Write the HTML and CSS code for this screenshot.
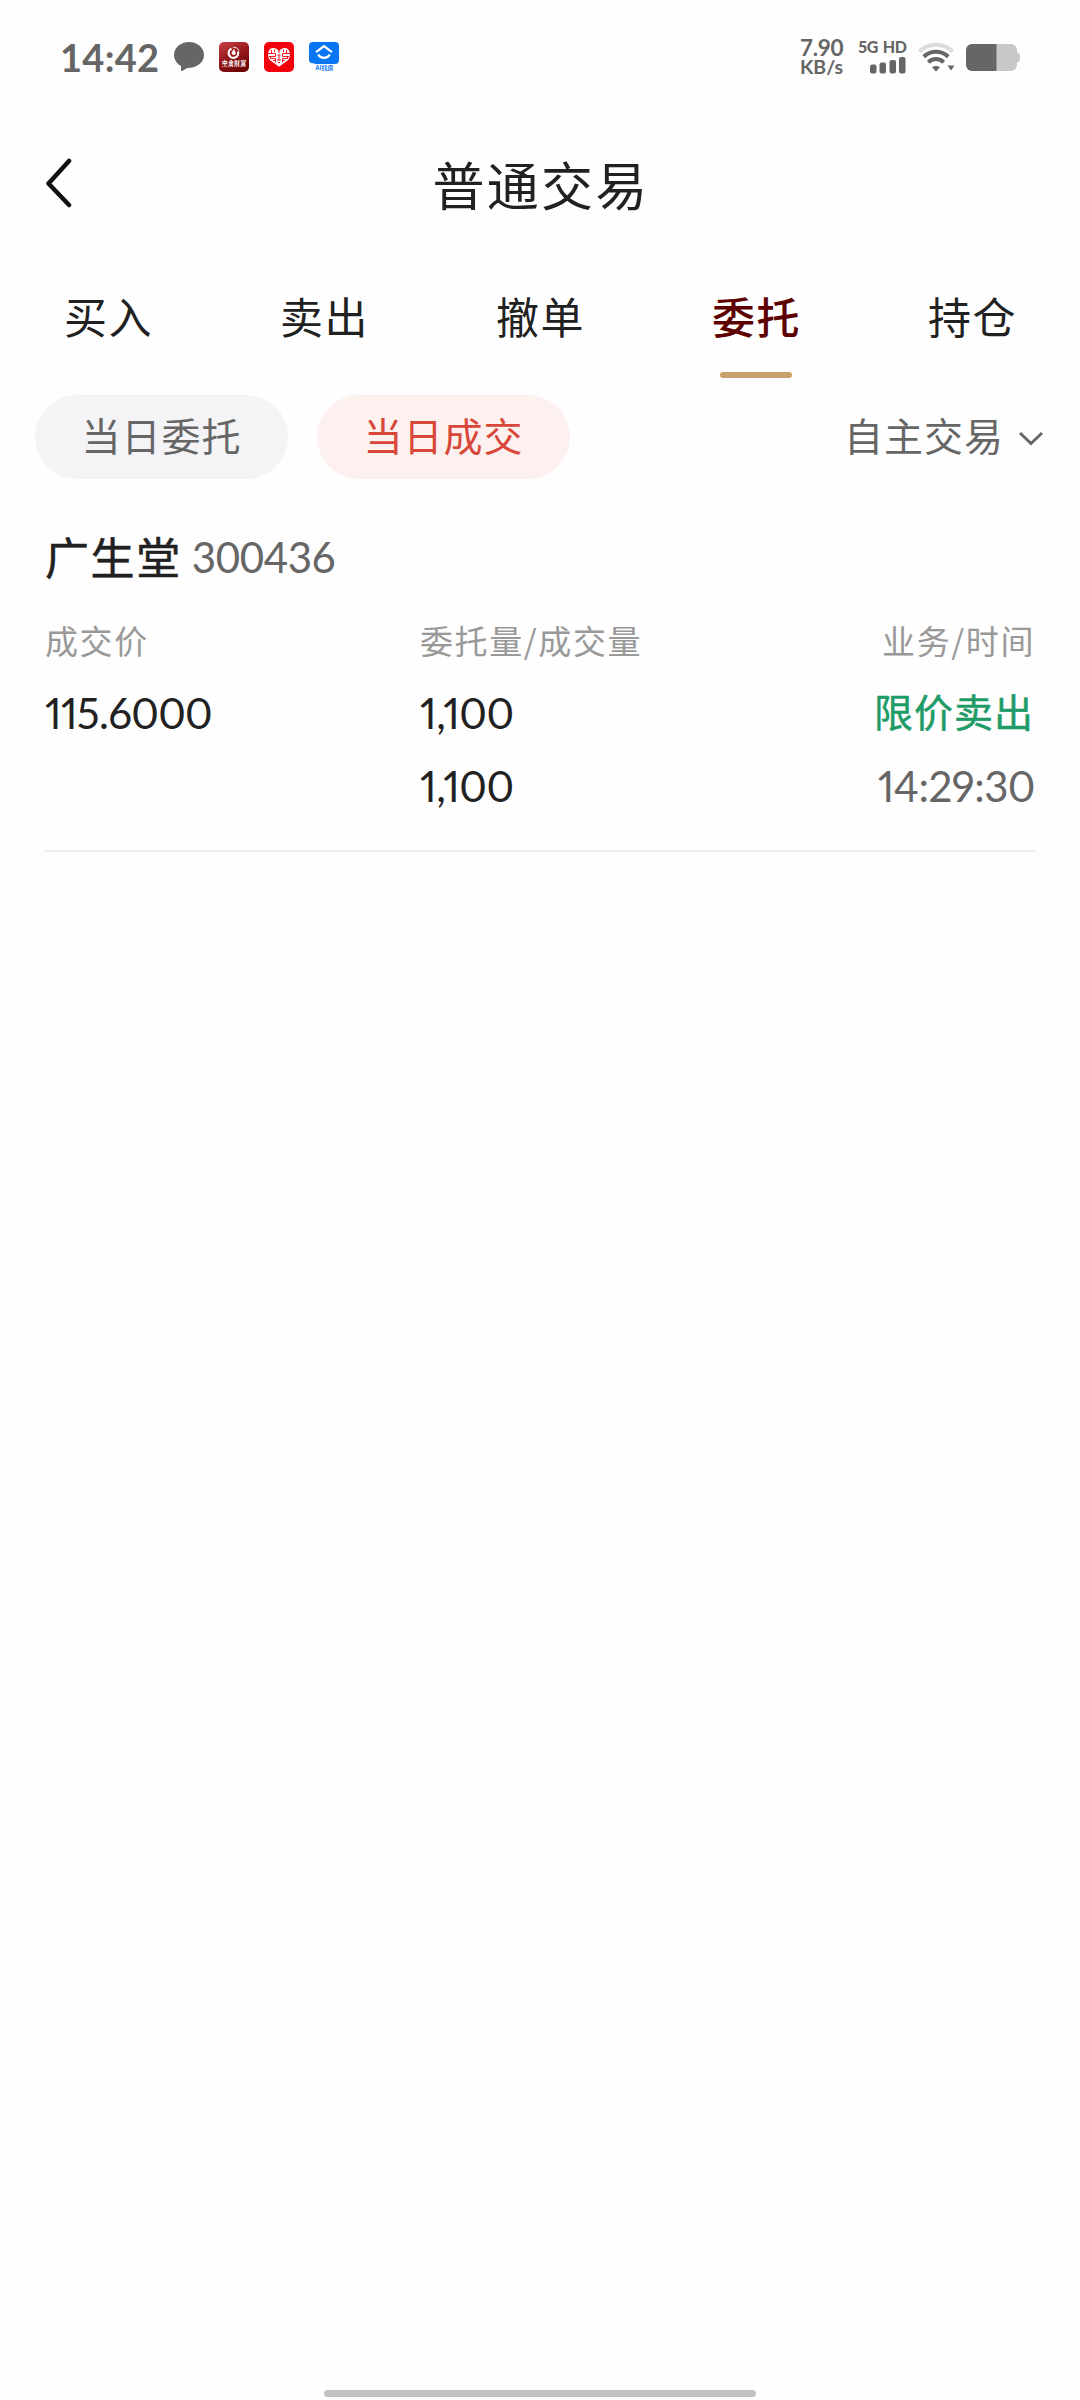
FILE: index.html
```html
<!DOCTYPE html>
<html lang="zh-CN">
<head>
<meta charset="utf-8">
<title>普通交易</title>
<link rel="stylesheet" href="styles.css">
</head>
<body>
<div class="screen">
  <header class="status">
    <span class="clock">14:42</span>
    <div class="apps">
      <svg width="30" height="30" viewBox="0 0 30 30"><path fill="#666" d="M15 0C6.500 0 0 5.700 0 13c0 4.600 2.700 8.600 7 11v4.300c0 .7.600.9 1.100.6l5.200-3C22.800 26 30 20.600 30 13 30 5.700 23.500 0 15 0z"/></svg>
      <svg width="30" height="30" viewBox="0 0 30 30">
        <defs><linearGradient id="wine" x1="0" y1="0" x2=".5" y2="1"><stop offset="0" stop-color="#c94347"/><stop offset=".55" stop-color="#96181c"/><stop offset="1" stop-color="#700508"/></linearGradient></defs>
        <rect width="30" height="30" rx="5" fill="url(#wine)"/>
        <path fill="none" stroke="#fff" stroke-width="2.200" d="M12.500 6.700A4.800 4.800 0 1 0 19 9.500"/>
        <path fill="none" stroke="#fff" stroke-width=".9" d="M14 5.300a6 6 0 0 1 6 3.500"/>
        <path fill="#fff" d="M15.300 6.500c-.8 2-3 2.800-2.600 5 .3 1.800 3.300 2 4 .2.600-1.700-1.500-2.700-1.400-5.200z"/>
        <text class="logo-text" x="3" y="22.800" font-size="5.600" textLength="24" fill="#fff">中金财富</text>
        <path stroke="#e9b9ba" stroke-width=".8" stroke-dasharray="1.500 .5" d="M3 24.600h24"/>
      </svg>
      <svg width="30" height="30" viewBox="0 0 30 30">
        <rect width="30" height="30" rx="5" fill="#f3000d"/>
        <path fill="#fff" d="M15 24.800 5.800 18C2.500 13.500 4 6 9.300 6c2.700 0 4.600 1.300 5.700 3.200C16.100 7.300 18 6 20.700 6c5.300 0 6.800 7.500 3.500 12z"/>
        <path fill="none" stroke="#f3000d" stroke-width=".9" d="M4 11.500h7.500v3H5M7.500 8v3.500m3-4V10m-4 4.500v2h5v4M9 18.500h3M15 8v3m-1.500 2h3m-1.500 0v5m-2 0h4m-3 2.500h2M26 11.500h-7.500v3H25M22.500 8v3.500m-3-4V10m4 4.500v2h-5v4M21 18.500h-3"/>
      </svg>
      <svg width="30" height="30" viewBox="0 0 30 30">
        <path fill="#0876f4" d="M4 0h22a4 4 0 0 1 4 4v14a4 4 0 0 1-4 4H7l-3-.8C1 21 0 20 0 18V4a4 4 0 0 1 4-4z"/>
        <path fill="none" stroke="#fff" stroke-width="2.300" d="m7 10.200 8-6 8 6M9.200 12.500a6.600 6.600 0 0 0 11.600 0"/>
        <text class="logo-text" x="6.500" y="28.400" font-size="6" textLength="18" fill="#0876f4">AI找房</text>
      </svg>
    </div>
    <div class="sys">
      <div class="rate"><span class="rate-num">7.90</span><span class="rate-unit">KB/s</span></div>
      <div class="cell">
        <span class="cell-label">5G HD</span>
        <svg width="36" height="17" viewBox="0 0 36 17" fill="#666"><rect y="7.500" width="6.500" height="9" rx="2"/><rect x="9.500" y="5.500" width="6.500" height="11" rx="2"/><rect x="19.500" y="3" width="6.500" height="13.500" rx="2"/><rect x="29" width="6.500" height="16.500" rx="2"/></svg>
      </div>
      <svg class="wifi" width="37" height="30" viewBox="0 0 37 30">
        <g fill="none" stroke-width="4"><path stroke="#dcdcdc" d="M1.300 9.500a24 24 0 0 1 33.400 0"/><path stroke="#666" d="M5.800 14.700a17.500 17.500 0 0 1 24.400 0"/><path stroke="#666" d="M10.300 20.200a11 11 0 0 1 15.400 0"/></g>
        <path fill="#666" d="M14 25.200c2.300-1.700 5.700-1.700 8 0l-4 4.300zM29.500 23.500H36.500L33 28.500z"/>
      </svg>
      <svg width="54" height="27" viewBox="0 0 54 27"><path fill="#c8c8c8" d="M30 0h15a6 6 0 0 1 6 6v2.500c2 0 3 2 3 5s-1 5-3 5V21a6 6 0 0 1-6 6H30z"/><path fill="#666" d="M6 0h24.500v27H6a6 6 0 0 1-6-6V6a6 6 0 0 1 6-6z"/></svg>
    </div>
  </header>

  <nav class="title-bar">
    <svg class="back" width="28" height="50" viewBox="0 0 28 50"><path fill="none" stroke="#111" stroke-width="4.500" stroke-linecap="round" stroke-linejoin="round" d="M25 3 4.500 25.500 25 47"/></svg>
    <h1 class="title">普通交易</h1>
  </nav>

  <div class="tabs">
    <span class="tab">买入</span>
    <span class="tab">卖出</span>
    <span class="tab">撤单</span>
    <span class="tab tab-active">委托</span>
    <span class="tab">持仓</span>
  </div>

  <div class="filters">
    <span class="pill">当日委托</span>
    <span class="pill pill-active">当日成交</span>
    <span class="select">自主交易
      <svg class="caret" width="26" height="16" viewBox="0 0 26 16"><path fill="none" stroke="#666" stroke-width="3" d="m2 2 11 10.500L24 2"/></svg>
    </span>
  </div>

  <main class="deal">
    <div class="stock"><span class="name">广生堂</span><span class="code">300436</span></div>
    <div class="grid">
      <span class="label">成交价</span><span class="label">委托量/成交量</span><span class="label end">业务/时间</span>
      <span class="num price">115.6000</span><span class="num">1,100</span><span class="side end">限价卖出</span>
      <span></span><span class="num">1,100</span><span class="num time end">14:29:30</span>
    </div>
  </main>

  <div class="home-bar"></div>
</div>
</body>
</html>
```
FILE: styles.css
```css
* { box-sizing: border-box; }
body {
  margin: 0;
  background: #fefefe;
  color: #212121;
  font-family: "Noto Sans CJK SC", sans-serif;
}
svg { display: block; flex: none; }
.screen {
  width: 1080px;
  height: 2400px;
  display: flex;
  flex-direction: column;
}

.status {
  height: 114px;
  padding: 0 60px;
  display: flex;
  align-items: center;
  color: #666;
}
.clock {
  width: 114px;
  font: 700 38px/38px Lato, sans-serif;
  letter-spacing: 0.3px;
  white-space: nowrap;
}
.apps { display: flex; gap: 15px; }
.logo-text { font-family: "Noto Sans CJK SC", sans-serif; font-weight: 700; }
.sys { margin-left: auto; display: flex; align-items: center; }
.rate {
  width: 58px;
  display: flex;
  flex-direction: column;
  font-family: Lato, sans-serif;
  font-weight: 700;
}
.rate-num { font-size: 22.5px; line-height: 19px; letter-spacing: -0.3px; }
.rate-unit { font-size: 19.5px; line-height: 20px; }
.cell {
  width: 60px;
  display: flex;
  flex-direction: column;
  gap: 3px;
}
.cell-label {
  font: 900 16px/14px Lato, sans-serif;
  letter-spacing: -0.6px;
  word-spacing: 2px;
  white-space: nowrap;
}
.cell svg { margin-left: 12px; }
.wifi { margin-right: 11px; }

.title-bar {
  height: 140px;
  padding: 0 44px;
  display: grid;
  grid-template-columns: 28px 1fr 28px;
  align-items: center;
}
.back { margin-bottom: 3px; }
.title {
  margin: 0;
  padding-left: 2px;
  font-size: 52px;
  line-height: 60px;
  font-weight: 400;
  letter-spacing: 2.2px;
  text-align: center;
}

.tabs {
  height: 124px;
  display: grid;
  grid-template-columns: repeat(5, 1fr);
}
.tab {
  display: flex;
  flex-direction: column;
  align-items: center;
  padding-top: 31px;
  font-size: 43px;
  line-height: 60px;
  letter-spacing: 1.5px;
  text-indent: 1px;
}
.tab-active { color: #5c0000; font-weight: 500; }
.tab-active::after {
  content: "";
  width: 72px;
  height: 6px;
  margin-top: 27px;
  border-radius: 3px;
  background: #c7a06b;
}

.filters {
  height: 118px;
  padding: 17px 36px 0 35px;
  display: flex;
  align-items: flex-start;
  gap: 29px;
  font-size: 39px;
  line-height: 79px;
  letter-spacing: 1px;
  color: #666;
}
.pill {
  width: 253px;
  height: 84px;
  border-radius: 42px;
  background: #f4f4f7;
  text-align: center;
}
.pill-active { background: #fdf1ef; color: #d9473a; }
.select {
  margin-left: auto;
  display: flex;
  align-items: center;
  gap: 14px;
}
.caret { margin-top: 8px; }

.deal {
  height: 356px;
  margin: 0 45px;
  border-bottom: 2px solid #eee;
}
.stock {
  height: 112px;
  padding-top: 28px;
  display: flex;
  align-items: baseline;
  gap: 10px;
  line-height: 64px;
}
.name {
  font-size: 44px;
  letter-spacing: 1.6px;
  -webkit-text-stroke: 0.5px currentColor;
}
.code { font: 400 42px/64px Lato, sans-serif; letter-spacing: -0.4px; color: #666; position: relative; top: -2px; }
.grid {
  display: grid;
  grid-template-columns: 375px 1fr auto;
  grid-template-rows: 63px 78px 68px;
  align-items: center;
}
.end { text-align: right; }
.label { font-size: 33px; line-height: 50px; letter-spacing: 1.6px; color: #999; }
.num { font: 400 42px/60px Lato, sans-serif; font-feature-settings: "pnum"; letter-spacing: -0.5px; padding-top: 5px; }
.price { letter-spacing: -0.7px; }
.side {
  margin: 0 1px 0 0;
  font-size: 39px;
  line-height: 60px;
  letter-spacing: 1px;
  color: #1f9b67;
  -webkit-text-stroke: 0.5px currentColor;
}
.time { color: #666; }

.home-bar {
  width: 432px;
  height: 7px;
  margin: auto auto 3px;
  border-radius: 4px;
  background: #c2c2c2;
}
```
